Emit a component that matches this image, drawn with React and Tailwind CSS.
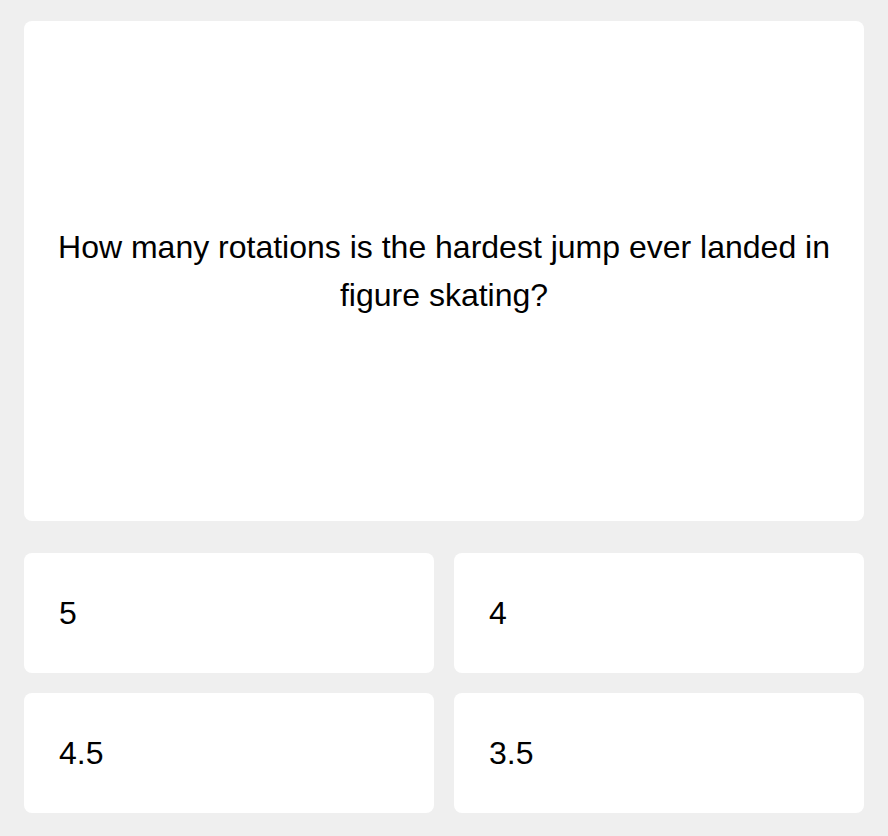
import React from "react";

const answers = ["5", "4", "4.5", "3.5"];

const App = () => {
  return (
    <div
      className="min-h-screen bg-[#efefef] px-6 pt-[21px] pb-[23px]"
      style={{ fontFamily: '"Liberation Sans", Arial, sans-serif' }}
    >
      <div className="h-[500px] bg-white rounded-lg flex items-center justify-center px-8">
        <p className="text-[32px] leading-[48px] text-black text-center">
          How many rotations is the hardest jump ever landed in figure skating?
        </p>
      </div>
      <div className="mt-8 grid grid-cols-2 gap-x-5 gap-y-5">
        {answers.map((a) => (
          <div
            key={a}
            className="h-[120px] bg-white rounded-lg flex items-center px-[35px] text-[32px] text-black"
          >
            {a}
          </div>
        ))}
      </div>
    </div>
  );
};

export default App;
